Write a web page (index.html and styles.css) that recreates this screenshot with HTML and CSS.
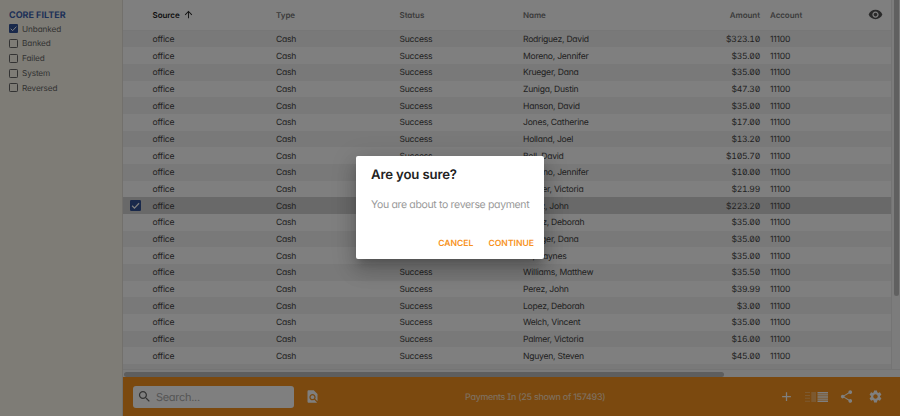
FILE: index.html
```html
<!DOCTYPE html>
<html lang="en">
<head>
<meta charset="utf-8">
<title>Payments In</title>
<link rel="stylesheet" href="styles.css">
</head>
<body>
<div class="app">
  <aside class="sidebar">
    <h2 class="filter-title">CORE FILTER</h2>
    <ul class="filters">
      <li><svg class="box checked" viewBox="0 0 18 18"><rect width="18" height="18" rx="2"/><path d="M3.5 9.5l3.8 3.8 7.5-8"/></svg>Unbanked</li>
      <li><svg class="box" viewBox="0 0 18 18"><rect x="1" y="1" width="16" height="16" rx="1.5"/></svg>Banked</li>
      <li><svg class="box" viewBox="0 0 18 18"><rect x="1" y="1" width="16" height="16" rx="1.5"/></svg>Failed</li>
      <li><svg class="box" viewBox="0 0 18 18"><rect x="1" y="1" width="16" height="16" rx="1.5"/></svg>System</li>
      <li><svg class="box" viewBox="0 0 18 18"><rect x="1" y="1" width="16" height="16" rx="1.5"/></svg>Reversed</li>
    </ul>
  </aside>
  <main class="main">
    <div class="table-area">
      <div class="table">
        <div class="row head">
          <span></span>
          <span class="sorted">Source<svg class="arrow" viewBox="0 0 24 24"><path d="M4 12l1.41 1.41L11 7.83V20h2V7.83l5.58 5.59L20 12l-8-8-8 8z"/></svg></span>
          <span>Type</span><span>Status</span><span>Name</span><span class="amount-head">Amount</span><span>Account</span>
          <svg class="eye" viewBox="0 0 24 24"><path d="M12 4.5C7 4.500 2.730 7.610 1 12c1.730 4.390 6 7.500 11 7.500s9.270-3.110 11-7.500c-1.730-4.390-6-7.500-11-7.500zM12 17c-2.760 0-5-2.240-5-5s2.240-5 5-5 5 2.240 5 5-2.240 5-5 5zm0-8c-1.660 0-3 1.340-3 3s1.340 3 3 3 3-1.340 3-3-1.340-3-3-3z"/></svg>
        </div>
        <div id="rows" class="rows"></div>
      </div>
      <div class="vtrack"><div class="vthumb"></div></div>
    </div>
    <div class="htrack"><div class="hthumb"></div></div>
    <footer class="footer">
      <div class="search">
        <svg viewBox="0 0 24 24"><path d="M15.500 14h-.79l-.28-.27C15.410 12.590 16 11.110 16 9.500 16 5.910 13.090 3 9.500 3S3 5.910 3 9.500 5.910 16 9.500 16c1.610 0 3.090-.59 4.230-1.570l.27.28v.79l5 4.990L20.490 19l-4.990-5zm-6 0C7.010 14 5 11.990 5 9.500S7.010 5 9.500 5 14 7.010 14 9.500 11.990 14 9.500 14z"/></svg>
        <span>Search...</span>
      </div>
      <svg class="icon find" viewBox="0 0 24 24"><path d="M20 19.590V8l-6-6H6c-1.100 0-1.990.9-1.990 2L4 20c0 1.100.89 2 1.990 2H18c.45 0 .85-.15 1.190-.4l-4.430-4.430c-.8.520-1.740.830-2.760.830-2.760 0-5-2.240-5-5s2.240-5 5-5 5 2.240 5 5c0 1.020-.31 1.960-.83 2.750L20 19.590zM9 13c0 1.660 1.340 3 3 3s3-1.340 3-3-1.340-3-3-3-3 1.340-3 3z"/></svg>
      <span class="summary">Payments In (25 shown of 157493)</span>
      <div class="actions">
        <svg class="icon" viewBox="0 0 24 24"><path d="M19 13h-6v6h-2v-6H5v-2h6V5h2v6h6v2z"/></svg>
        <svg class="density" viewBox="0 0 23 10"><path opacity=".3" d="M0 0h5v1H0zM0 2.900h5v1H0zM0 5.800h5v1H0zM0 8.700h5v1H0z"/><path opacity=".3" d="M6.300 0h4.700v10H6.300z"/><path d="M12.500 0H23v1.400H12.500zM12.500 2.150H23v1.400H12.500zM12.500 4.300H23v1.400H12.500zM12.500 6.450H23v1.400H12.500zM12.500 8.600H23V10H12.500z"/></svg>
        <svg class="icon share" viewBox="0 0 24 24"><path d="M18 16.080c-.76 0-1.440.3-1.960.770L8.910 12.700c.05-.23.090-.46.090-.7s-.04-.47-.09-.7l7.050-4.110c.54.500 1.250.810 2.040.810 1.660 0 3-1.340 3-3s-1.340-3-3-3-3 1.340-3 3c0 .24.040.47.090.7L8.040 9.810C7.500 9.310 6.790 9 6 9c-1.660 0-3 1.340-3 3s1.340 3 3 3c.79 0 1.500-.31 2.040-.81l7.120 4.160c-.05.210-.08.430-.08.650 0 1.610 1.310 2.920 2.920 2.920s2.920-1.310 2.920-2.920-1.310-2.920-2.920-2.920z"/></svg>
        <svg class="icon gear" viewBox="0 0 24 24"><path d="M19.140 12.940c.04-.3.060-.61.060-.94s-.02-.64-.07-.94l2.030-1.580c.18-.14.230-.41.120-.61l-1.920-3.320c-.12-.22-.37-.29-.59-.22l-2.390.96c-.5-.38-1.030-.7-1.620-.94l-.36-2.540c-.04-.24-.24-.41-.48-.41h-3.840c-.24 0-.43.170-.47.410l-.36 2.540c-.59.240-1.130.570-1.620.940l-2.390-.96c-.22-.08-.47 0-.59.220L2.740 8.870c-.12.210-.08.470.12.610l2.030 1.580c-.05.300-.09.630-.09.940s.02.640.07.940l-2.030 1.580c-.18.140-.23.410-.12.610l1.920 3.320c.12.220.37.290.59.220l2.390-.96c.5.380 1.030.7 1.620.94l.36 2.540c.05.240.24.410.48.410h3.840c.24 0 .44-.17.470-.41l.36-2.540c.59-.24 1.130-.56 1.620-.94l2.390.96c.22.080.47 0 .59-.22l1.920-3.320c.12-.22.070-.47-.12-.61l-2.010-1.580zM12 15.600c-1.980 0-3.600-1.620-3.600-3.600s1.620-3.600 3.600-3.600 3.600 1.620 3.600 3.600-1.620 3.600-3.600 3.600z"/></svg>
      </div>
    </footer>
  </main>
</div>
<div class="overlay">
  <section class="dialog" role="dialog">
    <h1>Are you sure?</h1>
    <p>You are about to reverse payment</p>
    <div class="buttons"><span>CANCEL</span><span>CONTINUE</span></div>
  </section>
</div>
<script src="rows.js"></script>
</body>
</html>
```
FILE: styles.css
```css
* { box-sizing: border-box; }
body {
  margin: 0;
  width: 900px;
  height: 416px;
  overflow: hidden;
  font-family: Inter, "Liberation Sans", sans-serif;
  font-feature-settings: "cv11";
  text-rendering: geometricPrecision;
  background: #fff;
}
.app { display: flex; height: 416px; }
.sidebar {
  width: 123px;
  flex: none;
  padding: 10px 9px;
  background: #fdf9ed;
  border-right: 1px solid #e4e0d8;
}
.filter-title { margin: 0; font-size: 9px; line-height: 11px; font-weight: 700; color: #3c62b0; }
.filters { list-style: none; margin: 0; padding: 0; }
.filters li { display: flex; align-items: center; gap: 4px; height: 14.8px; padding-top: .6px; font-size: 8.200px; letter-spacing: -.1px; color: #666; }
.box { width: 9px; height: 9px; fill: none; stroke: #666; stroke-width: 2; }
.box.checked rect, .tick rect { fill: #335296; stroke: none; }
.box.checked path, .tick path { fill: none; stroke: #fff; stroke-width: 2; }
.main { flex: 1; min-width: 0; display: flex; flex-direction: column; }
.table-area { height: 368.500px; display: flex; overflow: hidden; }
.table { flex: 1; }
.row {
  display: grid;
  grid-template-columns: 29.500px 123.500px 123.500px 123.500px 148px 89px 1fr;
  align-items: center;
  height: 16.680px;
  padding-top: 2px;
  font-size: 8.600px;
  letter-spacing: -.25px;
  color: #444;
}
.row.head {
  grid-template-columns: 29.500px 123.500px 123.500px 123.500px 148px 89px 1fr 23px;
  height: 30.500px;
  padding-top: 0;
  border-bottom: 1px solid #eee;
  font-size: 8px;
  letter-spacing: -.05px;
  font-weight: 600;
  color: #777;
}
.row.odd { background: #f3f3f3; }
.row.selected { background: #d2d2d2; }
.sorted { display: flex; align-items: center; gap: 3px; color: #222; }
.arrow { width: 11px; height: 11px; fill: #222; }
.amount-head, .amount { text-align: right; }
.amount { font-feature-settings: "tnum", "zero"; }
.row > :nth-child(7) { padding-left: 10px; }
.eye { width: 15px; height: 15px; fill: #555; }
.tick { display: block; width: 11px; height: 11px; margin: -2px 0 0 7px; }
.vtrack { width: 9px; padding: 0 1px 0 2px; background: #f8f8f8; border-left: 1px solid #e8e8e8; }
.vthumb { height: 296px; background: #c1c1c1; border-radius: 0 0 3px 3px; }
.htrack { height: 8.500px; padding: 2px 1px; background: #f6f6f6; border-top: 1px solid #e8e8e8; }
.hthumb { width: 600px; height: 5px; border-radius: 3px; background: #bcbcbc; }
.footer { flex: 1; display: flex; align-items: center; padding: 0 17px 0 10px; background: #f7931e; }
.search { display: flex; align-items: center; gap: 4px; width: 161px; height: 22px; padding-left: 4px; border-radius: 3px; background: #fff; font-size: 11px; letter-spacing: -.3px; color: #aaa; }
.search svg { width: 15px; height: 15px; fill: #666; }
.icon { width: 15px; height: 15px; fill: #fff; }
.find { margin-left: 11px; }
.summary { margin-left: 145px; padding-top: 1px; font-size: 9px; letter-spacing: -.28px; color: #fff; opacity: .75; white-space: nowrap; font-feature-settings: "cv11", "cv08"; }
.actions { display: flex; align-items: center; margin-left: auto; }
.density { width: 23px; height: 10px; margin: 0 11px; fill: #fff; }
.gear { margin-left: 14px; }
.overlay {
  position: absolute;
  inset: 0;
  display: flex;
  align-items: center;
  justify-content: center;
  padding-bottom: 1px;
  background: rgba(0, 0, 0, .5);
}
.dialog {
  width: 188px;
  height: 103px;
  padding: 11px 10px 7px 15px;
  background: #fff;
  border-radius: 2px;
  box-shadow: 0 6px 8px -3px rgba(0, 0, 0, .2), 0 12px 19px 1px rgba(0, 0, 0, .14), 0 5px 23px 4px rgba(0, 0, 0, .12);
}
.dialog h1 { margin: 0; font-size: 13.200px; letter-spacing: -.15px; line-height: 16px; font-weight: 600; color: #222; }
.dialog p { margin: 15px 0 0; font-size: 10.500px; letter-spacing: -.34px; line-height: 14px; color: #999; white-space: nowrap; }
.buttons { display: flex; justify-content: flex-end; gap: 15px; margin-top: 26px; font-size: 8.600px; line-height: 12px; font-weight: 600; color: #f7931e; font-feature-settings: normal; }
```
FILE: rows.js
```js
const payments = [
  ["Rodriguez, David", "$323.10"], ["Moreno, Jennifer", "$35.00"],
  ["Krueger, Dana", "$35.00"], ["Zuniga, Dustin", "$47.30"],
  ["Hanson, David", "$35.00"], ["Jones, Catherine", "$17.00"],
  ["Holland, Joel", "$13.20"], ["Bell, David", "$105.70"],
  ["Moreno, Jennifer", "$10.00"], ["Palmer, Victoria", "$21.99"],
  ["Perez, John", "$223.20"], ["Lopez, Deborah", "$35.00"],
  ["Krueger, Dana", "$35.00"], ["Lu, Haynes", "$35.00"],
  ["Williams, Matthew", "$35.50"], ["Perez, John", "$39.99"],
  ["Lopez, Deborah", "$3.00"], ["Welch, Vincent", "$35.00"],
  ["Palmer, Victoria", "$16.00"], ["Nguyen, Steven", "$45.00"]
];
const tick = '<svg class="tick" viewBox="0 0 18 18"><rect width="18" height="18" rx="2"/><path d="M3.500 9.500l3.800 3.800 7.500-8"/></svg>';
document.getElementById("rows").innerHTML = payments.map(([name, amount], i) => {
  const state = i === 10 ? "selected" : i % 2 ? "" : "odd";
  return `<div class="row ${state}"><span>${i === 10 ? tick : ""}</span><span>office</span><span>Cash</span><span>Success</span><span>${name}</span><span class="amount">${amount}</span><span>11100</span></div>`;
}).join("") + '<div class="row odd"></div>';
```
